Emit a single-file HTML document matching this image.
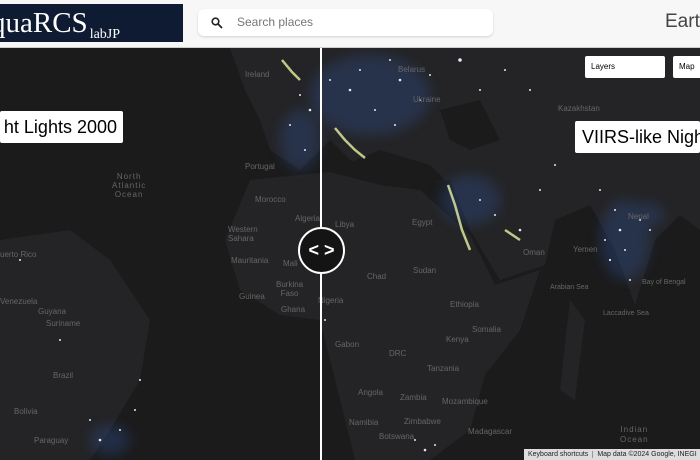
<!DOCTYPE html>
<html><head><meta charset="utf-8"><style>
*{margin:0;padding:0;box-sizing:border-box}
body{width:700px;height:460px;overflow:hidden;background:#1b1b1c;font-family:"Liberation Sans",sans-serif;position:relative}
#hdr{position:absolute;left:0;top:0;width:700px;height:48px;background:#f7f7f7;border-bottom:1px solid #ccc}
#logo{position:absolute;left:0;top:4px;width:183px;height:38px;background:#0f1a33;color:#fff;font-family:"Liberation Serif",serif;font-size:29px;line-height:38px;white-space:nowrap;overflow:hidden}
#logo span{position:absolute;left:-9px;top:0}
#logo small{font-size:14px;vertical-align:-6px;margin-left:2px}
#search{position:absolute;left:198px;top:9px;width:295px;height:27px;background:#fff;border-radius:6px;box-shadow:0 1px 2px rgba(0,0,0,.15);font-size:12px;color:#777;line-height:27px;padding-left:39px}
#earth{position:absolute;left:665px;top:11px;font-size:19px;color:#444}
.lbl{position:absolute;color:#666;font-size:8px;white-space:nowrap}
.box{position:absolute;background:#fff;color:#000;font-size:19px;border-radius:2px;white-space:nowrap;line-height:32px;overflow:hidden}
.btn{position:absolute;background:#fff;font-size:8px;color:#000;line-height:22px;padding-left:6px;border-radius:2px}
</style></head><body>
<svg width="700" height="460" style="position:absolute;left:0;top:0">
<defs><filter id="b"><feGaussianBlur stdDeviation="6"/></filter></defs>
<g fill="#242426">
<path d="M230,48 L700,48 L700,230 L680,215 L655,240 L635,305 L615,250 L590,205 L555,220 L545,265 L500,280 L470,230 L450,180 L420,185 L400,165 L380,175 L350,160 L330,140 L300,170 L270,150 L260,120 L245,90 Z"/>
<path d="M250,180 L330,172 L380,185 L420,190 L470,235 L495,285 L540,270 L520,330 L485,375 L470,430 L430,460 L355,460 L335,380 L320,320 L280,315 L240,290 L225,240 Z"/>
<path d="M0,240 L70,230 L110,260 L150,320 L140,380 L110,430 L90,460 L0,460 Z"/>
<path d="M570,300 L585,320 L575,400 L560,390 Z"/>
</g>
<g fill="#1b1b1c"><path d="M345,165 L380,150 L430,165 L445,180 L420,185 L380,178 Z"/><path d="M440,110 L480,100 L500,140 L470,150 L450,140 Z"/></g>
<g fill="#2f4f90" opacity=".35" filter="url(#b)">
<ellipse cx="370" cy="95" rx="60" ry="40"/><ellipse cx="300" cy="140" rx="20" ry="30"/><ellipse cx="625" cy="240" rx="25" ry="40"/><ellipse cx="470" cy="200" rx="30" ry="25"/><ellipse cx="640" cy="215" rx="25" ry="12"/><ellipse cx="110" cy="440" rx="20" ry="15"/>
</g>
<g stroke="#e8f0a0" stroke-width="2.5" fill="none" opacity=".8">
<path d="M335,128 L345,140 L355,150 L365,158"/><path d="M448,185 L455,205 L462,230 L470,250"/><path d="M282,60 L292,72 L300,80"/><path d="M505,230 L520,240"/>
</g>
<g fill="#dfe8ff">
<circle cx="400" cy="80" r="1.3"/><circle cx="420" cy="100" r="1"/><circle cx="350" cy="90" r="1.3"/><circle cx="460" cy="60" r="1.8"/><circle cx="480" cy="90" r="1"/><circle cx="310" cy="110" r="1.3"/><circle cx="620" cy="230" r="1.3"/><circle cx="640" cy="220" r="1"/><circle cx="610" cy="260" r="1.1"/><circle cx="630" cy="280" r="1"/><circle cx="520" cy="230" r="1.3"/><circle cx="540" cy="190" r="1"/><circle cx="100" cy="440" r="1.3"/><circle cx="140" cy="380" r="1"/><circle cx="20" cy="260" r="1"/><circle cx="425" cy="450" r="1.3"/><circle cx="390" cy="60" r="1"/><circle cx="580" cy="140" r="1"/><circle cx="660" cy="130" r="1"/>
<circle cx="360" cy="70" r="1"/><circle cx="330" cy="80" r="1"/><circle cx="375" cy="110" r="1"/><circle cx="395" cy="125" r="1"/><circle cx="300" cy="95" r="1"/><circle cx="290" cy="125" r="1"/><circle cx="305" cy="150" r="1"/><circle cx="430" cy="75" r="1"/><circle cx="505" cy="70" r="1"/><circle cx="530" cy="90" r="1"/><circle cx="555" cy="165" r="1"/><circle cx="600" cy="190" r="1"/><circle cx="615" cy="210" r="1"/><circle cx="625" cy="250" r="1"/><circle cx="650" cy="230" r="1"/><circle cx="605" cy="240" r="1"/><circle cx="480" cy="200" r="1"/><circle cx="495" cy="215" r="1"/><circle cx="120" cy="430" r="1"/><circle cx="90" cy="420" r="1"/><circle cx="135" cy="410" r="1"/><circle cx="60" cy="340" r="1"/><circle cx="325" cy="320" r="1"/><circle cx="415" cy="440" r="1"/><circle cx="435" cy="445" r="1"/></g>
</svg>
<div class="lbl" style="left:245px;top:70px">Ireland</div>
<div class="lbl" style="left:398px;top:65px">Belarus</div>
<div class="lbl" style="left:413px;top:95px">Ukraine</div>
<div class="lbl" style="left:558px;top:104px">Kazakhstan</div>
<div class="lbl" style="left:245px;top:162px">Portugal</div>
<div class="lbl" style="left:255px;top:195px">Morocco</div>
<div class="lbl" style="left:295px;top:214px">Algeria</div>
<div class="lbl" style="left:335px;top:220px">Libya</div>
<div class="lbl" style="left:412px;top:218px">Egypt</div>
<div class="lbl" style="left:112px;top:172px;text-align:center;letter-spacing:1px;line-height:9px">North<br>Atlantic<br>Ocean</div>
<div class="lbl" style="left:228px;top:225px;line-height:9px">Western<br>Sahara</div>
<div class="lbl" style="left:231px;top:256px">Mauritania</div>
<div class="lbl" style="left:283px;top:259px">Mali</div>
<div class="lbl" style="left:367px;top:272px">Chad</div>
<div class="lbl" style="left:413px;top:266px">Sudan</div>
<div class="lbl" style="left:276px;top:280px;line-height:9px;text-align:center">Burkina<br>Faso</div>
<div class="lbl" style="left:239px;top:292px">Guinea</div>
<div class="lbl" style="left:281px;top:305px">Ghana</div>
<div class="lbl" style="left:318px;top:296px">Nigeria</div>
<div class="lbl" style="left:450px;top:300px">Ethiopia</div>
<div class="lbl" style="left:472px;top:325px">Somalia</div>
<div class="lbl" style="left:446px;top:335px">Kenya</div>
<div class="lbl" style="left:335px;top:340px">Gabon</div>
<div class="lbl" style="left:389px;top:349px">DRC</div>
<div class="lbl" style="left:427px;top:364px">Tanzania</div>
<div class="lbl" style="left:358px;top:388px">Angola</div>
<div class="lbl" style="left:400px;top:393px">Zambia</div>
<div class="lbl" style="left:442px;top:397px">Mozambique</div>
<div class="lbl" style="left:349px;top:418px">Namibia</div>
<div class="lbl" style="left:404px;top:417px">Zimbabwe</div>
<div class="lbl" style="left:468px;top:427px">Madagascar</div>
<div class="lbl" style="left:379px;top:432px">Botswana</div>
<div class="lbl" style="left:550px;top:284px;font-size:7px">Arabian Sea</div>
<div class="lbl" style="left:642px;top:279px;font-size:7px">Bay of Bengal</div>
<div class="lbl" style="left:603px;top:310px;font-size:7px">Laccadive Sea</div>
<div class="lbl" style="left:620px;top:425px;letter-spacing:1px;line-height:10px;text-align:center">Indian<br>Ocean</div>
<div class="lbl" style="left:573px;top:245px">Yemen</div>
<div class="lbl" style="left:523px;top:248px">Oman</div>
<div class="lbl" style="left:628px;top:212px">Nepal</div>
<div class="lbl" style="left:0;top:250px">uerto Rico</div>
<div class="lbl" style="left:0;top:297px">Venezuela</div>
<div class="lbl" style="left:38px;top:307px">Guyana</div>
<div class="lbl" style="left:46px;top:319px">Suriname</div>
<div class="lbl" style="left:53px;top:371px">Brazil</div>
<div class="lbl" style="left:14px;top:407px">Bolivia</div>
<div class="lbl" style="left:34px;top:436px">Paraguay</div>
<div id="hdr"><div id="logo"><span>quaRCS<small>labJP</small></span></div>
<div id="search"><svg width="12" height="12" style="position:absolute;left:13px;top:8px"><circle cx="4.5" cy="4.5" r="3.3" fill="none" stroke="#222" stroke-width="1.6"/><path d="M7,7 L11,11" stroke="#222" stroke-width="1.8"/></svg>Search places</div>
<div id="earth">Earth</div></div>
<div class="box" style="left:0;top:111px;width:123px;text-align:right;padding-right:6px;font-size:18px">ht Lights 2000</div>
<div class="box" style="left:575px;top:121px;width:125px;padding-left:7px;font-size:18px">VIIRS-like Nigh</div>
<div class="btn" style="left:585px;top:56px;width:80px">Layers</div>
<div class="btn" style="left:673px;top:56px;width:30px">Map</div>
<div style="position:absolute;left:320px;top:48px;width:2px;height:412px;background:#fff"></div>
<div style="position:absolute;left:298px;top:227px;width:47px;height:47px;border-radius:50%;background:#141414;border:2px solid #fff;color:#fff;font-size:18px;font-weight:bold;text-align:center;line-height:42px">&lt; &gt;</div>
<div style="position:absolute;left:524px;top:449px;width:176px;height:11px;background:#ddd;font-size:7px;color:#222;line-height:11px;white-space:nowrap;overflow:hidden"><span style="padding:0 4px;border-right:1px solid #999">Keyboard shortcuts</span><span style="padding-left:4px">Map data ©2024 Google, INEGI</span></div>
</body></html>
